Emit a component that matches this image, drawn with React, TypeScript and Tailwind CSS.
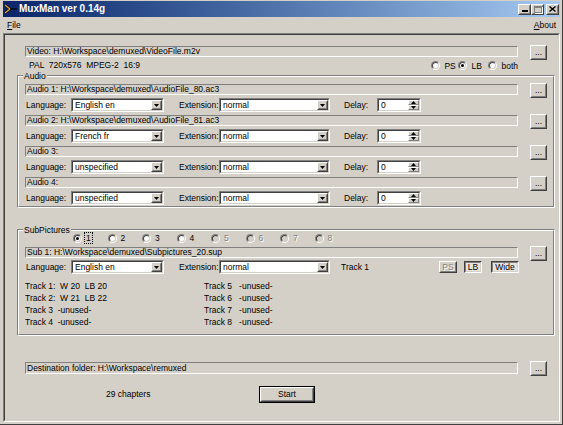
import clsx from 'clsx'
import type { ReactNode } from 'react'

// Win2k style 3D edges
const raisedOuter = 'border border-t-white border-l-white border-b-[#404040] border-r-[#404040]'
const raisedInner = 'border border-t-[#d4d0c8] border-l-[#d4d0c8] border-b-[#808080] border-r-[#808080]'
const sunkenOuter = 'border border-t-[#808080] border-l-[#808080] border-b-white border-r-white'
const sunkenInner = 'border border-t-[#404040] border-l-[#404040] border-b-[#d4d0c8] border-r-[#d4d0c8]'
const etchInner = 'border border-t-white border-l-white border-b-[#808080] border-r-[#808080]'
const grayText = 'text-[#808080] [text-shadow:1px_1px_0_#fff]'

function Raised({
  className,
  innerClassName,
  children,
}: {
  className?: string
  innerClassName?: string
  children?: ReactNode
}) {
  return (
    <div className={clsx(raisedOuter, 'shrink-0 bg-[#d4d0c8]', className)}>
      <div className={clsx(raisedInner, 'flex h-full w-full items-center justify-center', innerClassName)}>
        {children}
      </div>
    </div>
  )
}

function DownArrow() {
  return (
    <svg width="5" height="3" viewBox="0 0 5 3">
      <path d="M0 0h5L2.5 3z" fill="#000" />
    </svg>
  )
}

function UpArrow() {
  return (
    <svg width="5" height="3" viewBox="0 0 5 3">
      <path d="M0 3h5L2.5 0z" fill="#000" />
    </svg>
  )
}

function AppIcon() {
  return (
    <svg width="13" height="10" viewBox="0 0 13 10">
      <path d="M1 1l5 4-5 4" fill="none" stroke="#2a1a00" strokeWidth="2.4" />
      <path d="M1 1l5 4-5 4" fill="none" stroke="#d8a838" strokeWidth="1.1" />
      <path d="M6 5h7" stroke="#000" strokeWidth="1.2" />
    </svg>
  )
}

function Field({ children, className }: { children?: ReactNode; className?: string }) {
  return (
    <div className={clsx(sunkenOuter, 'h-[11px] overflow-hidden whitespace-nowrap pl-[1px] leading-[9px]', className)}>
      {children}
    </div>
  )
}

function DotsButton() {
  return (
    <Raised className="h-[15px] w-[17px]" innerClassName="items-end pb-[2px] leading-none">
      ...
    </Raised>
  )
}

function Combo({ value, className }: { value: string; className?: string }) {
  return (
    <div className={clsx(sunkenOuter, 'h-[14px] shrink-0', className)}>
      <div className={clsx(sunkenInner, 'flex h-full bg-white')}>
        <span className="flex-1 truncate pl-[2px] leading-[11px]">{value}</span>
        <Raised className="h-full w-[11px]">
          <DownArrow />
        </Raised>
      </div>
    </div>
  )
}

function Spin({ value }: { value: string }) {
  return (
    <div className={clsx(sunkenOuter, 'h-[14px] w-[44px] shrink-0')}>
      <div className={clsx(sunkenInner, 'flex h-full bg-white')}>
        <span className="flex-1 pl-[2px] leading-[11px]">{value}</span>
        <div className="flex w-[11px] flex-col">
          <div className="flex h-[5px] items-center justify-center border border-t-white border-l-white border-b-[#808080] border-r-[#808080] bg-[#d4d0c8]">
            <UpArrow />
          </div>
          <div className="flex h-[5px] items-center justify-center border border-t-white border-l-white border-b-[#808080] border-r-[#808080] bg-[#d4d0c8]">
            <DownArrow />
          </div>
        </div>
      </div>
    </div>
  )
}

function Radio({
  label,
  checked,
  disabled,
  focus,
}: {
  label: string
  checked?: boolean
  disabled?: boolean
  focus?: boolean
}) {
  return (
    <div className="flex items-center">
      <div className={clsx(sunkenOuter, 'h-[9px] w-[9px] shrink-0 rounded-full')}>
        <div
          className={clsx(
            sunkenInner,
            'flex h-full w-full items-center justify-center rounded-full',
            disabled ? 'bg-[#d4d0c8]' : 'bg-white',
          )}
        >
          {checked && <div className="h-[3px] w-[3px] rounded-full bg-black" />}
        </div>
      </div>
      <span
        className={clsx(
          'ml-[2px] border px-[1px] leading-[10px]',
          focus ? 'border-dotted border-black' : 'border-transparent',
          disabled && grayText,
        )}
      >
        {label}
      </span>
    </div>
  )
}

function GroupBox({ label, className, children }: { label: string; className?: string; children: ReactNode }) {
  return (
    <div className={clsx(sunkenOuter, 'relative', className)}>
      <div className={etchInner}>{children}</div>
      <span className="absolute -top-[5px] left-[5px] bg-[#d4d0c8] px-[1px] leading-[10px]">{label}</span>
    </div>
  )
}

function LangRow({ lang, ext, children }: { lang: string; ext: string; children?: ReactNode }) {
  return (
    <div className="flex h-[14px] items-center whitespace-nowrap">
      <span className="w-[46px] shrink-0 pl-[1px]">Language:</span>
      <Combo value={lang} className="w-[93px]" />
      <span className="w-[55px] shrink-0 pl-[15px]">Extension:</span>
      <Combo value={ext} className="w-[111px]" />
      {children}
    </div>
  )
}

function Block({ label, gap, children }: { label: string; gap: string; children: ReactNode }) {
  return (
    <div className="flex justify-between">
      <div className="w-[493px]">
        <Field className="mt-[1px]">{label}</Field>
        <div className={gap}>{children}</div>
      </div>
      <DotsButton />
    </div>
  )
}

const audio = [
  { label: 'Audio 1: H:\\Workspace\\demuxed\\AudioFile_80.ac3', lang: 'English en' },
  { label: 'Audio 2: H:\\Workspace\\demuxed\\AudioFile_81.ac3', lang: 'French fr' },
  { label: 'Audio 3:', lang: 'unspecified' },
  { label: 'Audio 4:', lang: 'unspecified' },
]

const leftTracks = ['Track 1:  W 20  LB 20', 'Track 2:  W 21  LB 22', 'Track 3  -unused-', 'Track 4  -unused-']
const rightTracks = ['Track 5   -unused-', 'Track 6   -unused-', 'Track 7   -unused-', 'Track 8   -unused-']

export default function App() {
  return (
    <div className="flex h-[425px] w-[563px] flex-col overflow-hidden border-r border-b border-r-[#404040] border-b-[#404040] bg-[#d4d0c8] pt-[1px] pr-[2px] pb-[2px] pl-[3px] font-['Liberation_Sans',Arial,sans-serif] text-[8.5px] text-black">
      {/* 타이틀 바 */}
      <div className="flex h-[16px] shrink-0 items-center bg-linear-to-r from-[#0a246a] to-[#a6caf0] pr-[1px] pl-[1px]">
        <AppIcon />
        <span className="ml-[2px] text-[10px] font-bold leading-none text-white">MuxMan ver 0.14g</span>
        <div className="ml-auto flex items-center">
          <Raised className="h-[11px] w-[13px]" innerClassName="items-end pb-[1px]">
            <div className="h-[2px] w-[6px] bg-black" />
          </Raised>
          <Raised className="h-[11px] w-[13px]">
            <div className="h-[7px] w-[8px] border border-t-2 border-[#808080] shadow-[1px_1px_0_#fff]" />
          </Raised>
          <Raised className="ml-[2px] h-[11px] w-[13px]">
            <svg width="7" height="6" viewBox="0 0 7 6">
              <path d="M0.5 0.5l6 5M6.5 0.5l-6 5" stroke="#000" strokeWidth="1.4" />
            </svg>
          </Raised>
        </div>
      </div>

      {/* 메뉴 */}
      <div className="flex h-[16px] shrink-0 items-center justify-between px-[4px]">
        <span>
          <span className="underline">F</span>ile
        </span>
        <span>
          <span className="underline">A</span>bout
        </span>
      </div>

      {/* 클라이언트 영역 */}
      <div className={clsx(sunkenOuter, 'flex-1')}>
        <div className={clsx(sunkenInner, 'h-full pt-[10px] pl-[12px]')}>
          <div className="w-[538px]">
            <div className="flex justify-between px-[8px]">
              <Field className="mt-[1px] w-[493px]">Video: H:\Workspace\demuxed\VideoFile.m2v</Field>
              <DotsButton />
            </div>
            <div className="flex h-[11px] items-center justify-between px-[8px]">
              <span className="pl-[4px] whitespace-pre">PAL  720x576  MPEG-2  16:9</span>
              <div className="mr-[27px] flex">
                <div className="w-[27px]">
                  <Radio label="PS" />
                </div>
                <div className="w-[30px]">
                  <Radio label="LB" checked />
                </div>
                <Radio label="both" />
              </div>
            </div>

            <GroupBox label="Audio" className="mt-[4px]">
              <div className="flex flex-col gap-[2px] px-[6px] pt-[6px] pb-[1px]">
                {audio.map((a) => (
                  <Block key={a.label} label={a.label} gap="mt-[3px]">
                    <LangRow lang={a.lang} ext="normal">
                      <span className="w-[47px] shrink-0 pl-[14px]">Delay:</span>
                      <Spin value="0" />
                    </LangRow>
                  </Block>
                ))}
              </div>
            </GroupBox>

            <GroupBox label="SubPictures" className="mt-[21px]">
              <div className="px-[6px] pt-[2px] pb-[6px]">
                <div className="ml-[48px] flex h-[10px] items-center">
                  {[1, 2, 3, 4, 5, 6, 7, 8].map((n) => (
                    <div key={n} className="w-[34.5px] shrink-0">
                      <Radio label={String(n)} checked={n === 1} focus={n === 1} disabled={n > 4} />
                    </div>
                  ))}
                </div>
                <div className="mt-[3px]">
                  <Block label="Sub 1: H:\Workspace\demuxed\Subpictures_20.sup" gap="mt-[2px]">
                    <LangRow lang="English en" ext="normal">
                      <span className="w-[109px] shrink-0 pl-[11px]">Track 1</span>
                      <Raised className="h-[12px] w-[18px]" innerClassName={clsx('leading-none', grayText)}>
                        PS
                      </Raised>
                      <div className="ml-[7px] h-[12px] w-[18px] shrink-0 border border-t-[#404040] border-l-[#404040] border-b-white border-r-white">
                        <div className="flex h-full items-center justify-center border border-t-[#808080] border-l-[#808080] border-b-[#d4d0c8] border-r-[#d4d0c8] bg-[#e6e3de] leading-none">
                          LB
                        </div>
                      </div>
                      <div className="ml-[9px] h-[12px] w-[28px] shrink-0 border border-t-[#404040] border-l-[#404040] border-b-white border-r-white">
                        <div className="flex h-full items-center justify-center border border-t-[#808080] border-l-[#808080] border-b-[#d4d0c8] border-r-[#d4d0c8] bg-[#e6e3de] leading-none">
                          Wide
                        </div>
                      </div>
                    </LangRow>
                  </Block>
                </div>
                <div className="mt-[6px] flex whitespace-pre">
                  <div className="w-[179px] shrink-0">
                    {leftTracks.map((t) => (
                      <div key={t} className="h-[12px] leading-[12px]">
                        {t}
                      </div>
                    ))}
                  </div>
                  <div>
                    {rightTracks.map((t) => (
                      <div key={t} className="h-[12px] leading-[12px]">
                        {t}
                      </div>
                    ))}
                  </div>
                </div>
              </div>
            </GroupBox>

            <div className="mt-[25px] flex justify-between px-[8px]">
              <Field className="mt-[1px] h-[12px] w-[493px] leading-[10px]">
                Destination folder: H:\Workspace\remuxed
              </Field>
              <DotsButton />
            </div>

            <div className="mt-[10px] flex items-center pl-[89px]">
              <span className="w-[153px] shrink-0">29 chapters</span>
              <div className="h-[17px] w-[56px] border border-black">
                <Raised className="h-full w-full" innerClassName="leading-none">
                  Start
                </Raised>
              </div>
            </div>
          </div>
        </div>
      </div>
    </div>
  )
}
